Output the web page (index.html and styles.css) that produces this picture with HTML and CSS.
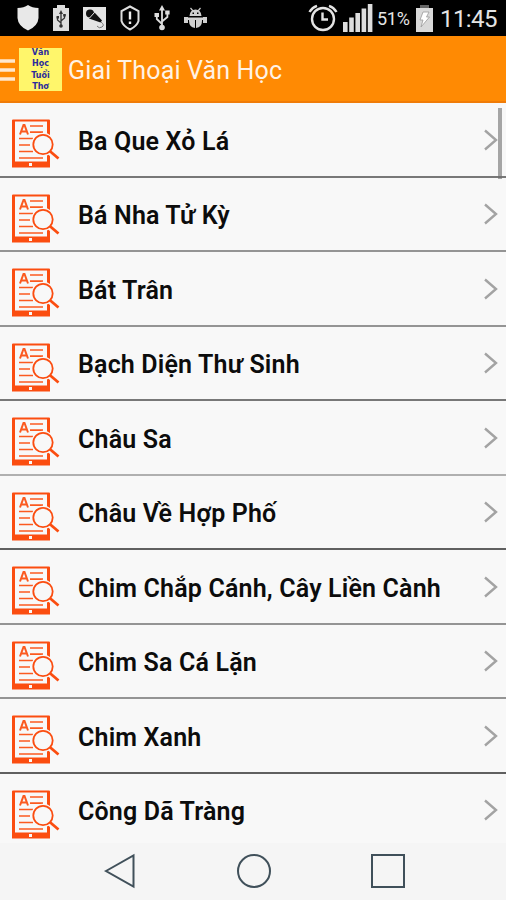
FILE: index.html
```html
<!DOCTYPE html>
<html lang="vi">
<head>
  <meta charset="UTF-8" />
  <meta name="viewport" content="width=device-width, initial-scale=1.0" />
  <title>Giai Thoại Văn Học</title>
  <link rel="stylesheet" href="styles.css">
</head>
<body>
  <svg class="hidden">
    <symbol id="book" viewBox="0 0 48 50">
      <path fill="#fb4d10" fill-rule="evenodd" d="M0 1.500Q0 .5 1 .5H37Q38 .5 38 1.500V48.500H0ZM3 2.500V42.500H35V2.500ZM17 44V47H20V44Z"/>
      <path fill="none" stroke="#fb5a20" stroke-width="1.700" d="M18 7H31M18 13.200H31M7 19.500H21M7 26H18M7 32.500H21M7 39H31"/>
      <path fill="none" stroke="#fb5a20" stroke-width="2" d="M8 15.500L11.500 6H12.500L16 15.500M9.500 12.500H14.500"/>
      <circle cx="31" cy="25.500" r="11.800" fill="#f8f8f8"/>
      <path stroke="#f8f8f8" stroke-width="6" d="M34 29L42 37"/>
      <circle cx="31" cy="25.500" r="9.700" fill="#f8f8f8" stroke="#fb4d10" stroke-width="1.800"/>
      <path stroke="#fb4d10" stroke-width="2.800" d="M38 32.300L46.500 39.500"/>
    </symbol>
    <symbol id="next" viewBox="0 0 14 22">
      <path fill="none" stroke="#a3a3a3" stroke-width="2.400" d="M1 1.500L12 11L1 20.500"/>
    </symbol>
  </svg>

  <div class="statusbar">
    <div class="notices">
      <svg width="22" height="26" viewBox="0 0 22 26"><path fill="#e8e8e8" d="M11 0Q15 3 21.500 3V13Q21 21 11 25.500Q1 21 .5 13V3Q7 3 11 0Z"/></svg>
      <svg width="16" height="26" viewBox="0 0 16 26">
        <path fill="#dedede" d="M4 0H12V3H16V26H0V3H4Z"/>
        <path fill="none" stroke="#333" stroke-width="1.300" d="M8 7V21M4.500 12V15L8 18M11.500 10V13L8 16"/>
        <path fill="#333" d="M8 5L10 9H6ZM3.500 11H6V13.500H3.500ZM10.200 9H12.800V11.500H10.200Z"/><circle cx="8" cy="21" r="1.800" fill="#333"/>
      </svg>
      <svg width="23" height="23" viewBox="0 0 23 23">
        <path fill="#e4e4e4" d="M0 0H23V23H0Z"/>
        <circle cx="7" cy="6.500" r="4" fill="#111"/>
        <path fill="#111" d="M6 11.500L11.500 5.500L19 13.500L17.500 15.500Z"/>
        <path stroke="#e4e4e4" stroke-width="1" d="M6.500 11L11.500 5.500"/>
        <path fill="none" stroke="#777" stroke-width="1" d="M18 15Q22 18 19 20T14 19"/>
      </svg>
      <svg width="20" height="26" viewBox="0 0 20 26">
        <path fill="none" stroke="#ddd" stroke-width="2" d="M10 1.500L18.500 6V16Q17 21 10 24.500Q3 21 1.500 16V6Z"/>
        <path stroke="#eee" stroke-width="2.400" d="M10 6.500V14.500M10 16.500V19"/>
      </svg>
      <svg width="16" height="26" viewBox="0 0 16 26">
        <path fill="none" stroke="#ddd" stroke-width="1.800" d="M8 4V22M2.800 10V14L8 19M13.400 8V12L8 16.500"/>
        <path fill="#ddd" d="M8 0L11 5.500H5ZM.5 8H5V12H.5ZM11.200 5.500H15.600V9.500H11.200Z"/><circle cx="8" cy="22.500" r="2.800" fill="#ddd"/>
      </svg>
      <svg width="23" height="22" viewBox="0 0 23 22">
        <path stroke="#ccc" stroke-width="1.200" d="M6.500 1L9 4M16.500 1L14 4"/>
        <path fill="#d0d0d0" d="M5.500 9Q6 2.500 11.500 2.500T17.500 9ZM0 10H4V16H0ZM19 10H23V16H19ZM5 10.500H11V21Q5 20 5 14ZM12 10.500H18V14Q18 20 12 21ZM3 10.500H20V13H3Z"/>
        <path fill="#000" d="M8.500 5.500H10V7H8.500ZM13 5.500H14.500V7H13Z"/>
      </svg>
    </div>
    <div class="device">
      <svg width="30" height="28" viewBox="0 0 30 28">
        <circle cx="15" cy="15" r="11" fill="none" stroke="#e4e4e4" stroke-width="2.400"/>
        <path fill="none" stroke="#e4e4e4" stroke-width="2.400" d="M14.500 8.500V15.500H20M1.500 8Q4 3.500 9 1.800M28.500 8Q26 3.500 21 1.800"/>
      </svg>
      <svg class="signal" width="30" height="28" viewBox="0 0 30 28"><path fill="#ddd" d="M0 18H4.600V28H0ZM6.200 13.500H10.800V28H6.200ZM12.400 9H17V28H12.400ZM18.600 4.500H23.200V28H18.600ZM24.800 0H29.400V28H24.800Z"/></svg>
      <span class="percent">51%</span>
      <svg class="battery" width="17" height="27" viewBox="0 0 17 27"><path fill="#666" d="M4 0H13V4H4Z"/><path fill="#d9d9d9" d="M0 3H17V27H0Z"/><path fill="#fff" stroke="#999" stroke-width=".8" d="M7 7H13L10.500 12H13.500L5 22L7 15H4Z"/></svg>
      <span class="clock">11:45</span>
    </div>
  </div>

  <header class="topbar">
    <svg class="menu" width="15" height="22" viewBox="0 0 15 22"><path stroke="#ffe8cf" stroke-width="3.400" d="M0 2H15M0 11H15M0 20H15"/></svg>
    <div class="logo"><span>Văn</span><span>Học</span><span>Tuổi</span><span>Thơ</span></div>
    <h1>Giai Thoại Văn Học</h1>
  </header>

  <main class="list">
    <ul>
      <li><svg class="book"><use href="#book"/></svg><span>Ba Que Xỏ Lá</span><svg class="next"><use href="#next"/></svg></li>
      <li><svg class="book"><use href="#book"/></svg><span>Bá Nha Tử Kỳ</span><svg class="next"><use href="#next"/></svg></li>
      <li><svg class="book"><use href="#book"/></svg><span>Bát Trân</span><svg class="next"><use href="#next"/></svg></li>
      <li><svg class="book"><use href="#book"/></svg><span>Bạch Diện Thư Sinh</span><svg class="next"><use href="#next"/></svg></li>
      <li><svg class="book"><use href="#book"/></svg><span>Châu Sa</span><svg class="next"><use href="#next"/></svg></li>
      <li><svg class="book"><use href="#book"/></svg><span>Châu Về Hợp Phố</span><svg class="next"><use href="#next"/></svg></li>
      <li><svg class="book"><use href="#book"/></svg><span>Chim Chắp Cánh, Cây Liền Cành</span><svg class="next"><use href="#next"/></svg></li>
      <li><svg class="book"><use href="#book"/></svg><span>Chim Sa Cá Lặn</span><svg class="next"><use href="#next"/></svg></li>
      <li><svg class="book"><use href="#book"/></svg><span>Chim Xanh</span><svg class="next"><use href="#next"/></svg></li>
      <li><svg class="book"><use href="#book"/></svg><span>Công Dã Tràng</span><svg class="next"><use href="#next"/></svg></li>
    </ul>
    <div class="scrollbar"></div>
  </main>

  <nav class="navbar">
    <svg width="34" height="36" viewBox="0 0 34 36"><path d="M3 18L30.500 2.500V33.500Z"/></svg>
    <svg width="36" height="36" viewBox="0 0 36 36"><circle cx="18" cy="18" r="16"/></svg>
    <svg width="36" height="36" viewBox="0 0 36 36"><path d="M2 2H34V34H2Z"/></svg>
  </nav>
</body>
</html>
```

FILE: styles.css
```css
* {
  margin: 0;
  padding: 0;
  box-sizing: border-box;
}

body {
  width: 506px;
  height: 900px;
  display: flex;
  flex-direction: column;
  overflow: hidden;
  background: #f5f5f5;
  font-family: Roboto, "Noto Sans", sans-serif;
}

svg {
  display: block;
  flex: none;
}

.hidden {
  width: 0;
  height: 0;
  position: absolute;
}

.statusbar {
  height: 36px;
  flex: none;
  display: flex;
  justify-content: space-between;
  align-items: center;
  padding: 0 9px 0 17px;
  background: #000;
  color: #e4e4e4;
}

.notices,
.device {
  display: flex;
  align-items: center;
}

.notices {
  gap: 14px;
}

.signal {
  margin-left: 5px;
}

.percent {
  margin-left: 4px;
  width: 34px;
  font-size: 18px;
  letter-spacing: -0.3px;
}

.battery {
  margin-left: 5px;
}

.clock {
  margin-left: 7px;
  width: 57px;
  font-size: 24px;
  letter-spacing: -0.6px;
  line-height: 36px;
  padding-top: 2px;
  white-space: nowrap;
}

.topbar {
  height: 67px;
  flex: none;
  display: flex;
  align-items: center;
  padding-top: 2px;
  background: #ff8a03;
  border-bottom: 2px solid #f07c08;
}

.logo {
  width: 43px;
  height: 43px;
  margin-left: 4px;
  overflow: hidden;
  background: #fff66b;
  color: #2b2b9c;
  font-family: "DejaVu Sans", sans-serif;
  font-size: 8px;
  font-weight: bold;
  line-height: 11.5px;
  display: flex;
  flex-direction: column;
  align-items: center;
  justify-content: center;
}

.topbar h1 {
  margin-left: 6px;
  padding-top: 1px;
  color: #fff3e6;
  font-size: 25px;
  font-weight: normal;
  letter-spacing: 0.15px;
}

.list {
  position: relative;
  height: 740px;
  flex: none;
  overflow: hidden;
  background: #f8f8f8;
}

.list ul {
  list-style: none;
}

.list li {
  height: 74.5px;
  padding: 1px 8px 0 12px;
  display: flex;
  align-items: center;
  border-bottom: 2px solid #949494;
}

.list li:nth-child(1),
.list li:nth-child(4) {
  border-color: #787878;
}

.list li:nth-child(5) {
  border-color: #b0b0b0;
}

.list li:nth-child(6),
.list li:nth-child(9) {
  border-color: #606060;
}

.list li span {
  flex: 1;
  margin-left: 18px;
  padding-top: 4px;
  font-size: 25px;
  font-weight: 600;
  line-height: 30px;
  letter-spacing: 0.17px;
  color: #0c0c0c;
}

.book {
  width: 48px;
  height: 50px;
  margin-top: 9px;
}

.next {
  width: 14px;
  height: 22px;
}

.scrollbar {
  position: absolute;
  top: 5px;
  right: 4px;
  width: 4px;
  height: 71px;
  background: rgba(110, 110, 110, 0.6);
}

.navbar {
  flex: 1;
  display: flex;
  align-items: center;
  justify-content: space-between;
  padding: 0 100px 2px 103px;
  background: #f5f5f5;
}

.navbar svg {
  fill: none;
  stroke: #40505a;
  stroke-width: 2;
}
```
